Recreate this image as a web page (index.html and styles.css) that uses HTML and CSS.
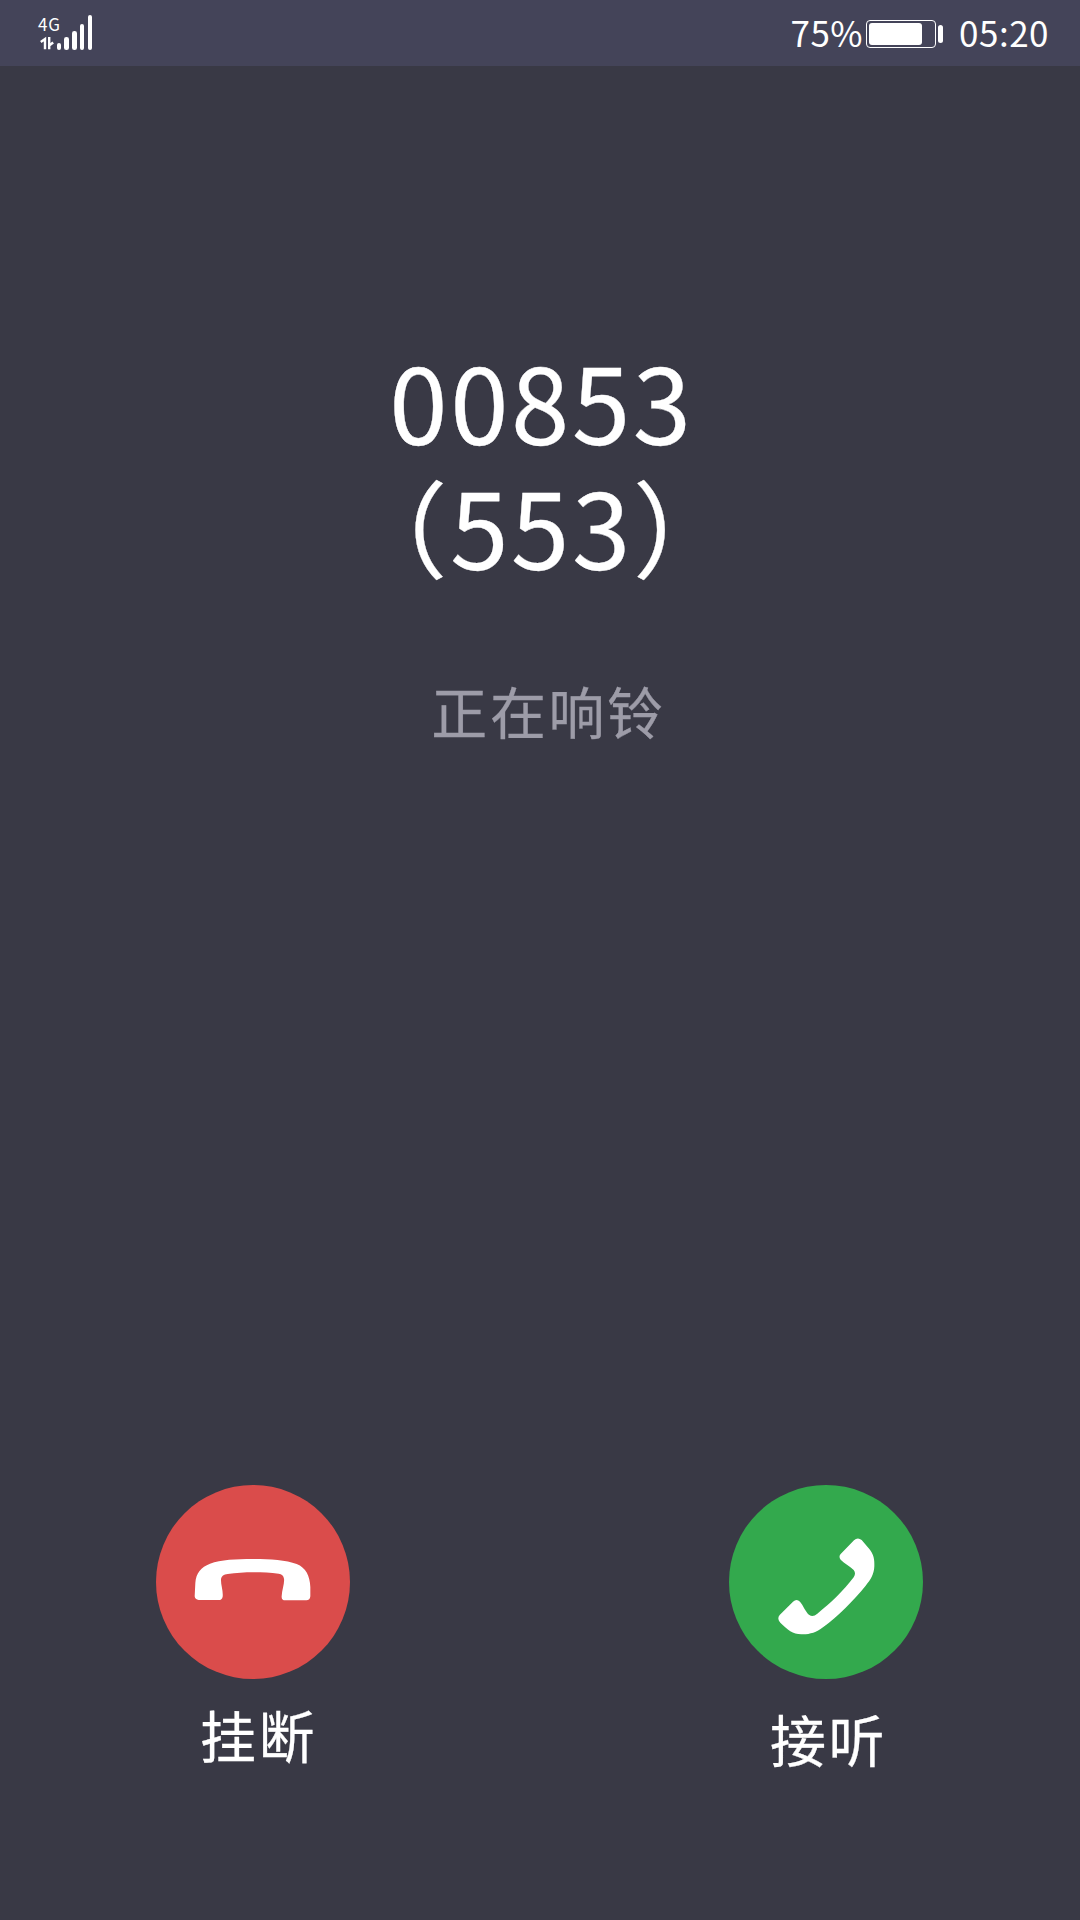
FILE: index.html
```html
<!DOCTYPE html>
<html lang="zh-CN">
<head>
  <meta charset="UTF-8">
  <title>正在响铃</title>
  <meta name="viewport" content="width=device-width, initial-scale=1.0">
  <link rel="stylesheet" href="styles.css">
</head>
<body>

  <header class="status-bar">
    <div class="network">
      <div class="network-type">
        <span>4G</span>
        <svg class="data-arrows" viewBox="0 0 14 14" width="14" height="14">
          <path d="M0.8 6 L5 3 V13.3 M9.2 1 V13.3 M9.2 9.5 L13.2 6.5" />
        </svg>
      </div>
      <div class="signal">
        <i class="bar bar-1"></i>
        <i class="bar bar-2"></i>
        <i class="bar bar-3"></i>
        <i class="bar bar-4"></i>
        <i class="bar bar-5"></i>
      </div>
    </div>
    <div class="status-right">
      <span class="percent">75%</span>
      <div class="battery"><div class="battery-level"></div></div>
      <div class="battery-tip"></div>
      <span class="time">05:20</span>
    </div>
  </header>

  <main class="call">
    <div class="caller">
      <h1 class="number">00853<br>（553）</h1>
      <p class="state">正在响铃</p>
    </div>

    <div class="actions">
      <div class="action hang-up">
        <button class="round red" aria-label="挂断">
          <svg viewBox="50 44 582 582">
            <path d="M166 378 L168 338 C170 308 185 290 212 280 C245 268 290 266 340 266 C390 266 440 269 472 281 C500 292 512 318 513 350 L513 378 Q512 390 501 390 L438 390 Q426 389 427 378 C428 357 436 340 434 325 Q432 312 418 310 C370 305 315 304 265 311 Q247 313 245 326 C244 343 252 362 250 379 Q248 389 238 389 L178 389 Q167 388 166 378 Z" />
          </svg>
        </button>
        <span class="label">挂断</span>
      </div>
      <div class="action answer">
        <button class="round green" aria-label="接听">
          <svg viewBox="59 44 582 582">
            <path d="M394 251 L434 210 Q445 199 457 209 L480 236 C493 252 496 267 495 288 C494 312 484 328 469 346 C432 391 387 437 341 471 C320 487 300 493 276 492 C250 491 235 479 213 457 Q202 445 211 434 L251 394 Q262 384 272 394 C281 404 289 426 300 434 Q311 441 324 430 C363 399 402 362 433 321 Q441 309 433 299 C423 288 405 279 394 268 Q387 259 394 251 Z" />
          </svg>
        </button>
        <span class="label">接听</span>
      </div>
    </div>
  </main>

</body>
</html>
```
FILE: styles.css
```css
* {
  box-sizing: border-box;
}

body {
  margin: 0;
  height: 100vh;
  display: flex;
  flex-direction: column;
  background: #393945;
  color: #fff;
  font-family: "Noto Sans CJK SC", sans-serif;
  overflow: hidden;
}

.status-bar {
  height: 66px;
  padding: 0 31px 0 38px;
  display: flex;
  justify-content: space-between;
  background: #444459;
}

.network {
  display: flex;
  padding-top: 14px;
}

.network-type {
  width: 18.5px;
  display: flex;
  flex-direction: column;
  font-size: 17px;
  line-height: 19px;
  letter-spacing: 0.9px;
}

.data-arrows {
  margin: 3px 0 0 2px;
  fill: none;
  stroke: #fff;
  stroke-width: 2.4;
}

.signal {
  height: 36px;
  display: flex;
  align-items: flex-end;
  gap: 3.2px;
}

.bar {
  width: 4.6px;
  border-radius: 2.3px;
  background: #fff;
}

.bar-1 { height: 7px; }
.bar-2 { height: 13px; }
.bar-3 { height: 19px; }
.bar-4 { height: 26px; }
.bar-5 { height: 35px; }

.status-right {
  display: flex;
  align-items: center;
  font-size: 35px;
  line-height: 64px;
  letter-spacing: 0.5px;
}

.percent,
.time {
  height: 66px;
}

.battery {
  width: 70px;
  height: 28px;
  margin: 2px 0 0 3px;
  padding: 2px;
  border: 1px solid #fff;
  border-radius: 4px;
}

.battery-level {
  width: 53px;
  height: 22px;
  border-radius: 3px;
  background: #fff;
}

.battery-tip {
  width: 5px;
  height: 18px;
  margin: 1px 16px 0 2px;
  border-radius: 2.5px;
  background: #fff;
}

.call {
  flex: 1;
  display: flex;
  flex-direction: column;
  justify-content: space-between;
  padding: 271px 157px 142px 156px;
}

.caller {
  text-align: center;
}

.number {
  margin: 0 0 0 4px;
  font-size: 105px;
  font-weight: 400;
  line-height: 125px;
  letter-spacing: 2.6px;
  -webkit-text-stroke: 0.3px #fff;
}

.state {
  margin: 83px 0 0 18px;
  color: #9d9ca8;
  font-size: 56px;
  line-height: 80px;
  letter-spacing: 2.6px;
  -webkit-text-stroke: 0.3px #9d9ca8;
}

.actions {
  display: flex;
  justify-content: space-between;
}

.action {
  display: flex;
  flex-direction: column;
  align-items: center;
}

.round {
  width: 194px;
  height: 194px;
  padding: 0;
  border: none;
  border-radius: 50%;
  cursor: pointer;
}

.round svg {
  display: block;
  fill: #fff;
}

.red {
  background: #da4c4b;
}

.green {
  background: #33a94d;
}

.label {
  font-size: 56px;
  line-height: 80px;
  letter-spacing: 2.6px;
  -webkit-text-stroke: 0.3px #fff;
}

.hang-up .label {
  margin-top: 15px;
  padding-left: 11px;
}

.answer .label {
  margin-top: 19px;
  padding-left: 5px;
}
```
